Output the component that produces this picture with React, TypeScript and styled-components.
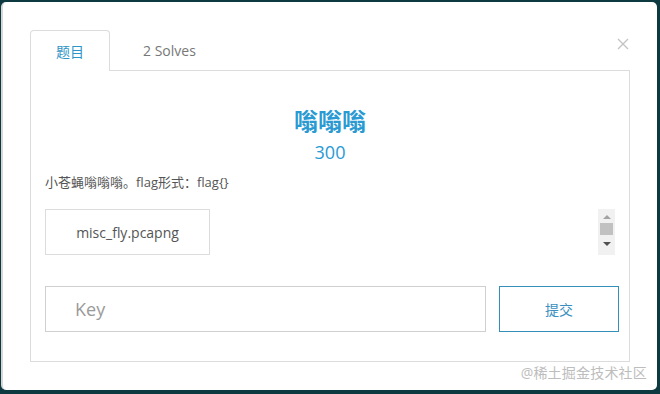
import React from "react";
import styled, { createGlobalStyle } from "styled-components";

const Global = createGlobalStyle`
  html, body { margin: 0; padding: 0; background: #0c3a40; }
  body { font-family: "Open Sans", "Noto Sans CJK SC", sans-serif; }
  * { box-sizing: border-box; }
`;

const Page = styled.div`
  width: 660px;
  height: 394px;
  padding: 2px 3px 4px 1px;
  background: #0c3a40;
`;

const Modal = styled.div`
  position: relative;
  width: 656px;
  height: 388px;
  background: #fff;
  border-left: 2px solid #d8d8d8;
  border-radius: 5px;
  padding: 28px 0 0 27px;
`;

const Close = styled.button`
  position: absolute;
  top: 36px;
  right: 28px;
  width: 12px;
  height: 12px;
  padding: 0;
  border: 0;
  background: none;
  display: flex;
`;

const Tabs = styled.div`
  display: flex;
  height: 40px;
  width: 600px;
`;

const Tab = styled.div<{ $active?: boolean }>`
  height: ${(p) => (p.$active ? "41px" : "40px")};
  padding: 0 ${(p) => (p.$active ? "25px" : "33px")};
  display: flex;
  align-items: center;
  font-size: 14px;
  color: ${(p) => (p.$active ? "#2f95c8" : "#777")};
  background: #fff;
  border: ${(p) => (p.$active ? "1px solid #dcdcdc" : "0")};
  border-bottom: 0;
  border-radius: 4px 4px 0 0;
  position: relative;
  z-index: 1;
`;

const Panel = styled.div`
  width: 600px;
  height: 292px;
  border: 1px solid #dcdcdc;
  padding: 0 14px;
  display: flex;
  flex-direction: column;
`;

const Title = styled.h2`
  margin: 36px 0 0;
  text-align: center;
  font-size: 24px;
  line-height: 28px;
  font-weight: 700;
  color: #2a9ad3;
`;

const Score = styled.div`
  margin-top: 6px;
  text-align: center;
  font-size: 18px;
  line-height: 22px;
  color: #2a9ad3;
`;

const Desc = styled.p`
  margin: 10px 0 0;
  font-size: 13px;
  line-height: 18px;
  color: #555;
`;

const FileRow = styled.div`
  margin-top: 18px;
  height: 46px;
  display: flex;
  justify-content: space-between;
`;

const FileBox = styled.div`
  width: 165px;
  height: 46px;
  border: 1px solid #dcdcdc;
  display: flex;
  align-items: center;
  justify-content: center;
  font-size: 14px;
  color: #555;
`;

const ScrollBar = styled.div`
  width: 17px;
  height: 46px;
  background: #f1f1f1;
  display: flex;
  flex-direction: column;
  align-items: center;
  padding-top: 6px;
`;

const Arrow = styled.div<{ $down?: boolean }>`
  width: 0;
  height: 0;
  border-left: 4px solid transparent;
  border-right: 4px solid transparent;
  ${(p) =>
    p.$down
      ? "border-top: 4px solid #505050;"
      : "border-bottom: 4px solid #a3a3a3;"}
`;

const Thumb = styled.div`
  width: 13px;
  height: 12px;
  background: #c1c1c1;
  margin: 4px 0 7px;
`;

const SubmitRow = styled.div`
  margin-top: 31px;
  display: flex;
  gap: 13px;
`;

const KeyInput = styled.input`
  flex: 0 0 441px;
  width: 441px;
  height: 46px;
  border: 1px solid #cfcfcf;
  padding: 0 0 0 29px;
  font-family: "Open Sans", "Noto Sans CJK SC", sans-serif;
  font-size: 18px;
  color: #555;
  outline: none;
  &::placeholder { color: #9a9a9a; }
`;

const Submit = styled.button`
  flex: 0 0 120px;
  width: 120px;
  height: 46px;
  border: 1px solid #3490b8;
  background: #fff;
  color: #3a8fc0;
  font-family: "Open Sans", "Noto Sans CJK SC", sans-serif;
  font-size: 14px;
`;

const Watermark = styled.div`
  position: absolute;
  right: 10px;
  bottom: 8px;
  font-size: 14px;
  color: #bdbdbd;
  letter-spacing: 0.2px;
`;

export default function App() {
  return (
    <Page>
      <Global />
      <Modal>
        <Close aria-label="close">
          <svg width="12" height="12" viewBox="0 0 12 12">
            <path d="M1 1L11 11M11 1L1 11" stroke="#c4c4c4" strokeWidth="1.4" />
          </svg>
        </Close>
        <Tabs>
          <Tab $active>题目</Tab>
          <Tab>2 Solves</Tab>
        </Tabs>
        <Panel>
          <Title>嗡嗡嗡</Title>
          <Score>300</Score>
          <Desc>小苍蝇嗡嗡嗡。flag形式：flag{"{}"}</Desc>
          <FileRow>
            <FileBox>misc_fly.pcapng</FileBox>
            <ScrollBar>
              <Arrow />
              <Thumb />
              <Arrow $down />
            </ScrollBar>
          </FileRow>
          <SubmitRow>
            <KeyInput placeholder="Key" />
            <Submit>提交</Submit>
          </SubmitRow>
        </Panel>
        <Watermark>@稀土掘金技术社区</Watermark>
      </Modal>
    </Page>
  );
}
